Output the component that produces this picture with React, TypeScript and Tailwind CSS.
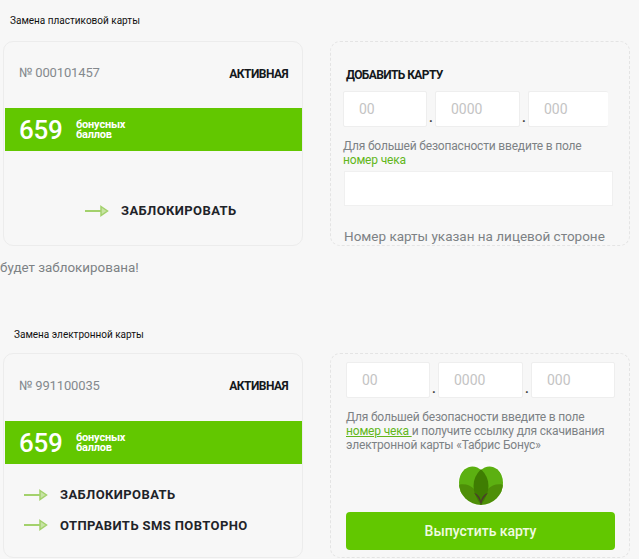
const font = { fontFamily: "Roboto, 'Liberation Sans', sans-serif" };

function Arrow() {
  return (
    <svg width="24" height="12" viewBox="0 0 24 12" className="shrink-0">
      <path d="M0 6H16" stroke="#a3d16c" strokeWidth="2" fill="none" />
      <path d="M16 1.5L22.5 6L16 10.5Z" fill="#c8e3a4" stroke="#a3d16c" strokeWidth="1.5" />
    </svg>
  );
}

function Leaf() {
  return (
    <svg width="46" height="46" viewBox="0 0 46 46">
      <defs>
        <clipPath id="c"><circle cx="23" cy="23" r="22" /></clipPath>
      </defs>
      <circle cx="23" cy="23" r="23" fill="#fbfbfb" />
      <g clipPath="url(#c)">
        <path d="M-1 25C1 9 14 1 24 11L24 34L-1 34Z" fill="#5cb011" />
        <path d="M47 25C45 9 32 1 22 11L22 34L47 34Z" fill="#5cb011" />
        <path d="M0 25C11 22 21 29 24 46H0Z" fill="#4e8f08" />
        <path d="M46 25C35 22 25 29 22 46H46Z" fill="#4e8f08" />
        <path d="M23 9C33 19 33 32 23 45C13 32 13 19 23 9Z" fill="#3f7d02" />
        <path d="M23 45C22 40 19 36 16 33C20 34 22 37 23 41C24 37 26 34 30 33C27 36 24 40 23 45Z" fill="#4b3f2a" />
      </g>
    </svg>
  );
}

function Points({ top }: { top: string }) {
  return (
    <div className={`ml-[1px] ${top} h-[43px] bg-[#62c700] flex items-center pl-[14px] text-white`}>
      <span className="text-[26px] font-medium leading-none w-[57px] tracking-[-0.3px]">659</span>
      <span className="text-[11px] font-bold leading-[10px] tracking-[-0.2px]">бонусных<br />баллов</span>
    </div>
  );
}

function Head({ num, shift }: { num: string; shift: string }) {
  return (
    <div className="flex justify-between items-center pl-[15px] pr-[14px] pt-[24px] h-[39px]">
      <span className={`text-[13px] text-[#84898d] tracking-[-0.15px] ${shift}`}>№ {num}</span>
      <span className="text-[12px] font-bold text-[#14181c] tracking-[-0.55px] mt-[1px]">АКТИВНАЯ</span>
    </div>
  );
}

function Action({ children }: { children: string }) {
  return (
    <div className="flex items-center gap-[12px]">
      <Arrow />
      <span className="text-[13px] font-bold tracking-[0.4px] text-[#1f2429]">{children}</span>
    </div>
  );
}

function Code({ text, w, clip }: { text: string; w: string; clip?: boolean }) {
  return (
    <div className={`${w} h-[36px] bg-white border border-[#eeeeee] rounded-[2px] flex items-center pl-[15px] text-[14px] text-[#c4c4c4] ${clip ? "border-r-0" : ""}`}>
      {text}
    </div>
  );
}

function Dot() {
  return <div className="w-[8px] h-[36px] flex items-end justify-center text-[13px] leading-[12px] font-bold text-[#444444] pb-[3px]">.</div>;
}

export default function App() {
  return (
    <div className="w-[639px] h-[559px] overflow-hidden bg-[#f7f7f7]" style={font}>
      <div className="h-[41px] pl-[10px] pt-[15px] text-[10px] leading-[12px] text-[#111111]">Замена пластиковой карты</div>

      <div className="flex pl-[3px] gap-[27px] h-[205px]">
        <div className="w-[300px] h-[205px] border border-[#ececec] rounded-[10px]">
          <Head num="000101457" shift="-mt-[1px]" />
          <Points top="mt-[27px]" />
          <div className="mt-[50px] pl-[81px]"><Action>ЗАБЛОКИРОВАТЬ</Action></div>
        </div>

        <div className="w-[300px] h-[205px] border border-dashed border-[#e4e4e4] rounded-[10px] overflow-hidden pl-[12px] pt-[26px]">
          <div className="pl-[3px] text-[12px] leading-[14px] font-bold text-[#14181c] tracking-[-0.6px]">ДОБАВИТЬ КАРТУ</div>
          <div className="flex mt-[9px]">
            <Code text="00" w="w-[84px]" />
            <Dot />
            <Code text="0000" w="w-[85px]" />
            <Dot />
            <Code text="000" w="w-[80px]" clip />
          </div>
          <div className="mt-[12px] text-[12px] leading-[14px] text-[#7d8285] tracking-[-0.18px] whitespace-nowrap">Для большей безопасности введите в поле</div>
          <div className="text-[12px] leading-[14px] text-[#62b61a] tracking-[-0.18px]">номер чека</div>
          <div className="mt-[4px] ml-[1px] w-[269px] h-[35px] bg-white border border-[#f0f0f0]"></div>
          <div className="mt-[21px] ml-[1px] text-[13.5px] leading-[18px] text-[#7d8285] whitespace-nowrap">Номер карты указан на лицевой стороне</div>
        </div>
      </div>

      <div className="h-[46px] pt-[14px] text-[13.4px] leading-[16px] text-[#7d8285]">будет заблокирована!</div>

      <div className="h-[61px] pt-[37px] pl-[14px]">
        <div className="text-[10px] leading-[12px] text-[#111111]">Замена электронной карты</div>
      </div>

      <div className="flex pl-[3px] gap-[27px] h-[205px]">
        <div className="w-[300px] h-[205px] border border-[#ececec] rounded-[10px]">
          <Head num="991100035" shift="" />
          <Points top="mt-[28px]" />
          <div className="mt-[21px] pl-[20px] flex flex-col gap-[11px]">
            <Action>ЗАБЛОКИРОВАТЬ</Action>
            <Action>ОТПРАВИТЬ SMS ПОВТОРНО</Action>
          </div>
        </div>

        <div className="w-[300px] h-[205px] border border-dashed border-[#e4e4e4] rounded-[10px] overflow-hidden pl-[15px] pt-[8px]">
          <div className="flex">
            <Code text="00" w="w-[84px]" />
            <Dot />
            <Code text="0000" w="w-[85px]" />
            <Dot />
            <Code text="000" w="w-[84px]" />
          </div>
          <div className="mt-[12px] text-[12px] leading-[14px] text-[#7d8285] tracking-[-0.18px] whitespace-nowrap">
            Для большей безопасности введите в поле<br />
            <span className="text-[#62b61a] underline">номер чека </span>и получите ссылку для скачивания<br />
            электронной карты «Табрис Бонус»
          </div>
          <div className="mt-[8px] flex justify-center w-[269px]"><Leaf /></div>
          <div className="mt-[6px] w-[269px] h-[38px] rounded-[4px] bg-[#62c700] flex items-center justify-center text-[14px] font-medium text-[#f0fbe0]">Выпустить карту</div>
        </div>
      </div>
    </div>
  );
}
